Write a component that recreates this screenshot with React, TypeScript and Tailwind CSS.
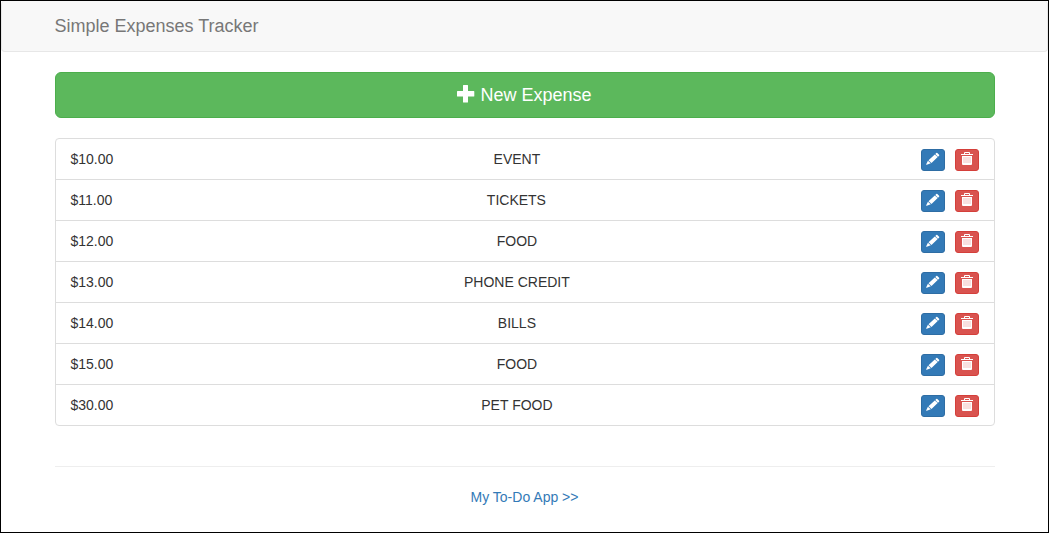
interface Expense {
  id: number;
  amount: number;
  category: string;
}

const expenses: Expense[] = [
  { id: 1, amount: 10, category: "Event" },
  { id: 2, amount: 11, category: "Tickets" },
  { id: 3, amount: 12, category: "Food" },
  { id: 4, amount: 13, category: "Phone Credit" },
  { id: 5, amount: 14, category: "Bills" },
  { id: 6, amount: 15, category: "Food" },
  { id: 7, amount: 30, category: "Pet Food" },
];

function PlusIcon() {
  return (
    <svg className="w-[18px] h-[18px]" viewBox="0 0 18 18" fill="currentColor" aria-hidden="true">
      <path d="M6.500 0h4q.5 0 .5.5V6h5.700q.6 0 .6.6v4.300q0 .6-.6.6H11V17q0 .5-.5.5h-4Q6 17.500 6 17v-5.500H.6q-.6 0-.6-.6V6.600Q0 6 .6 6H6V.5Q6 0 6.500 0z" />
    </svg>
  );
}

function PencilIcon() {
  return (
    <svg className="w-3 h-3 overflow-visible" viewBox="0 0 12 12" fill="currentColor" aria-hidden="true">
      <path d="M9.300 1q.5-.4 1 0l1.800 1.700q.4.5 0 1L11 4.700 8.300 2.100zM7.800 2.500l2.900 2.600L4.500 11 1.500 8.300zM.9 8.700l2.900 2.600-4 1.500q-.8.1-.6-.6z" />
    </svg>
  );
}

function TrashIcon() {
  return (
    <svg className="w-3 h-3 overflow-visible" viewBox="0 0 12 12" fill="currentColor" aria-hidden="true">
      <path d="M4 0h4q1 0 1 1v1h3v1H0V2h3V1q0-1 1-1zM4 1v1h4V1z" fillRule="evenodd" />
      <path d="M1 4h10v8q0 1-1 1H2q-1 0-1-1z" />
      <path d="M3 5v6M5 5v6M7 5v6M9 5v6" stroke="#d9534f" strokeWidth="1" opacity="0.350" />
    </svg>
  );
}

function Navbar() {
  return (
    <nav className="rounded border border-t-0 border-[#e7e7e7] bg-[#f8f8f8]">
      <div className="mx-auto w-full max-w-[940px] py-[15px]">
        <a href="#" className="block w-fit text-lg leading-5 text-[#777]">
          Simple Expenses Tracker
        </a>
      </div>
    </nav>
  );
}

function ExpenseRow({ expense }: { expense: Expense }) {
  return (
    <li className="flex items-start px-[15px] pt-[10px] pb-2">
      <span>${expense.amount.toFixed(2)}</span>
      <span className="flex-1 text-center uppercase">{expense.category}</span>
      <div className="flex gap-[10px]">
        <button
          type="button"
          aria-label="Edit expense"
          className="flex h-[22px] w-6 justify-center rounded-[3px] border border-[#2e6da4] bg-[#337ab7] pt-[2px] text-white hover:bg-[#286090]"
        >
          <PencilIcon />
        </button>
        <button
          type="button"
          aria-label="Delete expense"
          className="flex h-[22px] w-6 justify-center rounded-[3px] border border-[#d43f3a] bg-[#d9534f] pt-[2px] text-white hover:bg-[#c9302c]"
        >
          <TrashIcon />
        </button>
      </div>
    </li>
  );
}

export default function App() {
  return (
    <div className="min-h-screen border border-black bg-white font-['Liberation_Sans',Arial,sans-serif] text-sm leading-5 text-[#333]">
      <Navbar />

      <main className="mx-auto mt-5 w-full max-w-[940px]">
        <button
          type="button"
          className="flex w-full items-start justify-center gap-[5px] rounded-md border border-[#4cae4c] bg-[#5cb85c] px-4 py-[10px] text-lg leading-6 text-white hover:bg-[#449d44]"
        >
          <span className="pt-[2px]">
            <PlusIcon />
          </span>
          New Expense
        </button>

        <ul className="mt-5 divide-y divide-[#ddd] rounded border border-[#ddd]">
          {expenses.map((expense) => (
            <ExpenseRow key={expense.id} expense={expense} />
          ))}
        </ul>

        <hr className="mt-10 mb-5 border-[#eee]" />

        <footer className="text-center">
          <a href="#" className="text-[#337ab7] hover:underline">
            My To-Do App &gt;&gt;
          </a>
        </footer>
      </main>
    </div>
  );
}
